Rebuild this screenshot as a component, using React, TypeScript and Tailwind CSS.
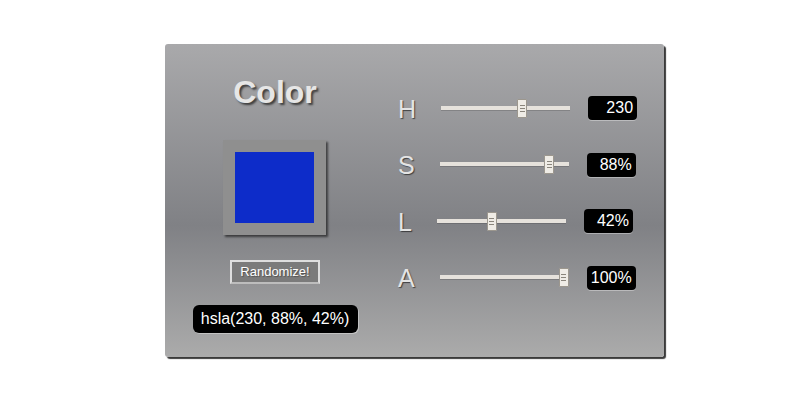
import { useState } from "react";

type Channel = {
  key: "h" | "s" | "l" | "a";
  label: string;
  max: number;
  unit: string;
};

const CHANNELS: Channel[] = [
  { key: "h", label: "H", max: 360, unit: "" },
  { key: "s", label: "S", max: 100, unit: "%" },
  { key: "l", label: "L", max: 100, unit: "%" },
  { key: "a", label: "A", max: 100, unit: "%" },
];

function Slider({ value, max }: { value: number; max: number }) {
  // thumb is 10px wide, travel = track width - thumb width
  const left = (value / max) * 119;
  return (
    <div className="relative h-[19px] w-[129px] shrink-0">
      <div className="absolute left-0 right-0 top-[7px] h-[4px] bg-[#e6e2dc] shadow-[0_1px_0_rgba(0,0,0,0.15)]" />
      <div
        className="absolute top-0 flex h-[19px] w-[10px] flex-col items-center justify-center gap-[2px] rounded-[1px] border border-[#9c978e] bg-[#efece6]"
        style={{ left }}
      >
        <span className="h-px w-[5px] bg-[#8a857c]" />
        <span className="h-px w-[5px] bg-[#8a857c]" />
        <span className="h-px w-[5px] bg-[#8a857c]" />
      </div>
    </div>
  );
}

export default function App() {
  const [color] = useState({ h: 230, s: 88, l: 42, a: 100 });
  const css = `hsla(${color.h}, ${color.s}%, ${color.l}%)`;

  return (
    <div className="flex h-[409px] w-[800px] bg-white font-['Liberation_Sans',Arial,sans-serif]">
      <div className="ml-[165px] mt-[44px] flex h-[313px] w-[499px] rounded-[3px] bg-[linear-gradient(to_bottom,#a9a9ab_0%,#808185_58%,#ababab_100%)] shadow-[2px_2px_1px_#3a3a3a]">
        <div className="flex w-[220px] flex-col items-center pt-[32px]">
          <h1 className="text-[32px] font-bold leading-[32px] text-[#e6e6e6] [text-shadow:2px_2px_2px_rgba(40,40,40,0.8)]">
            Color
          </h1>
          <div className="mt-[32px] -ml-px border-[12px] border-[#8f8f8f] shadow-[2px_2px_2px_rgba(0,0,0,0.55)]">
            <div className="h-[71px] w-[79px]" style={{ background: css }} />
          </div>
          <button className="mt-[25px] h-[24px] w-[90px] border-2 border-[#dedede] border-b-[#bdbdbd] bg-[#7b7b7b] text-[13px] leading-[18px] text-white [text-shadow:1px_1px_1px_rgba(0,0,0,0.35)]">
            Randomize!
          </button>
          <div className="mt-[21px] flex h-[28px] w-[165px] items-center justify-center rounded-[6px] bg-black text-[16px] text-white shadow-[1px_1px_0_rgba(255,255,255,0.35)]">
            {css}
          </div>
        </div>

        <div className="ml-[13px] flex flex-col gap-[32.5px] pt-[52px]">
          {CHANNELS.map((c) => (
            <div key={c.key} className="flex h-[24px] items-center">
              <span className="mt-[2px] text-[25px] leading-[25px] text-[#e4e4e4] [text-shadow:1px_1px_1px_rgba(30,30,30,0.7)]">
                {c.label}
              </span>
              <div className="ml-[25px]">
                <Slider value={color[c.key]} max={c.max} />
              </div>
              <div className="ml-[18px] flex h-[24px] w-[49px] items-center justify-end rounded-[4px] bg-black pr-[4px] text-[16px] text-white shadow-[0_1px_0_rgba(255,255,255,0.35)]">
                {color[c.key]}
                {c.unit}
              </div>
            </div>
          ))}
        </div>
      </div>
    </div>
  );
}
